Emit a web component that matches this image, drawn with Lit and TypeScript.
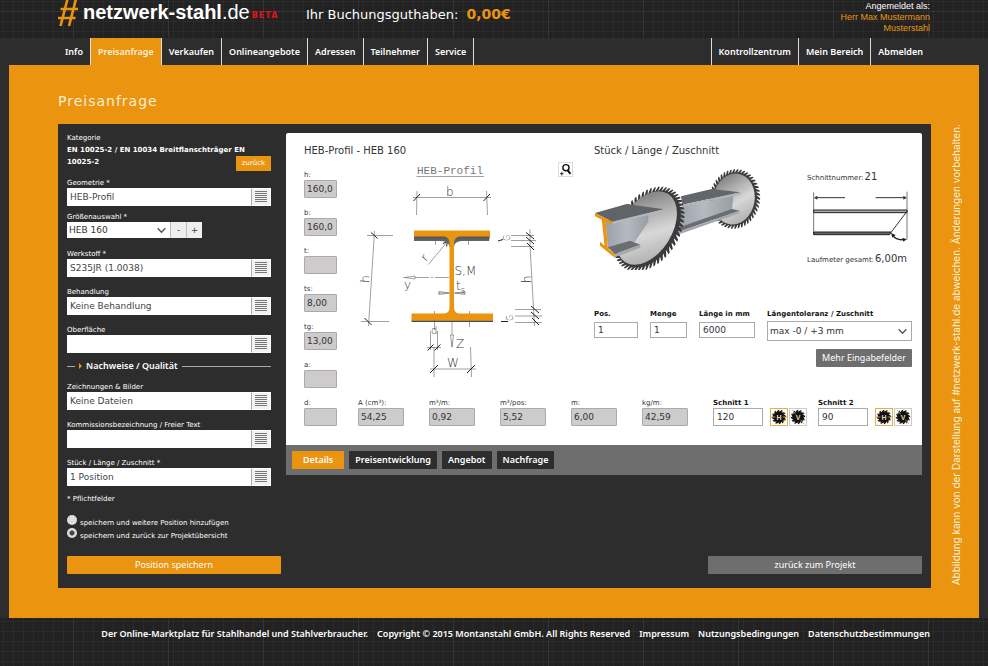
import { LitElement, html, svg, css } from "lit";
import { customElement } from "lit/decorators.js";
import { classMap } from "lit/directives/class-map.js";

const mainNav = ["Info", "Preisanfrage", "Verkaufen", "Onlineangebote", "Adressen", "Teilnehmer", "Service"];
const userNav = ["Kontrollzentrum", "Mein Bereich", "Abmelden"];
const tabs = ["Details", "Preisentwicklung", "Angebot", "Nachfrage"];
const dimensions = [["h:", "160,0"], ["b:", "160,0"], ["t:", ""], ["ts:", "8,00"], ["tg:", "13,00"], ["a:", ""]];
const totals = [["A (cm³):", "54,25"], ["m³/m:", "0,92"], ["m³/pos:", "5,52"], ["m:", "6,00"], ["kg/m:", "42,59"]];

/** Outline of a saw blade seen at an angle: a toothed, rotated ellipse. */
function sawOutline(cx: number, cy: number, rx: number, ry: number, tilt: number, teeth: number, depth: number): string {
  const a = (tilt * Math.PI) / 180;
  const at = (t: number, grow: number) => {
    const x = (rx + grow) * Math.cos(t);
    const y = (ry + grow) * Math.sin(t);
    const px = cx + x * Math.cos(a) - y * Math.sin(a);
    const py = cy + x * Math.sin(a) + y * Math.cos(a);
    return `${px.toFixed(1)} ${py.toFixed(1)}`;
  };
  const points: string[] = [];
  const step = (2 * Math.PI) / teeth;
  for (let i = 0; i < teeth; i++) {
    points.push(at(i * step, 0), at((i + 0.75) * step, depth), at((i + 1.15) * step, depth), at((i + 0.85) * step, 0));
  }
  return `M${points.join("L")}Z`;
}

const listIcon = html`<svg class="list-icon" viewBox="0 0 12 12" aria-hidden="true">
  <path d="M0 .5H12M0 2.5H12M0 4.5H12M0 6.5H12M0 8.5H12M0 10.5H12" stroke="#777" stroke-width="1" shape-rendering="crispEdges" />
</svg>`;

const chevron = html`<svg class="chevron" viewBox="0 0 8 6" aria-hidden="true">
  <path d="M.6 1 4 4.6 7.4 1" fill="none" stroke="#555" stroke-width="1.2" />
</svg>`;

const profileDrawing = html`<svg class="profile" viewBox="345 158 245 230" role="img" aria-label="HEB-Profil">
  <defs>
    <linearGradient id="steel" x1="0" y1="0" x2="0" y2="1">
      <stop offset="0" stop-color="#555" /><stop offset="1" stop-color="#777" />
    </linearGradient>
  </defs>
  <text class="cad-title" x="417" y="174">HEB-Profil</text>
  <g fill="none" stroke="#777" stroke-width=".7">
    <path d="M416.500 176.500H484" />
    <path d="M413 197.500H491M417 191 416.500 215M486.500 191 487.500 215" />
    <path d="M374.500 231 368.500 326M367 235.500H393M361 321.500H389" />
    <path d="M511 235.500H534M511 240.500H536M511 246.500H534M530 229V246L534.500 326M515 309.500H541M515 316H542M515 322.500H542" />
    <path d="M403 277.500H412M415 277.500H450" stroke-dasharray="14 2 2 2" />
    <path d="M438 293H465M439 291.500V294.500L449 293ZM465 291.500V294.500L455 293Z" />
    <path d="M428.500 264.500 447 242M435.500 240V245M468.500 240V245" />
    <path d="M430.500 331V350M437.500 331V350M427 347.500H441M434.500 311V330M469.500 311V327" />
    <path d="M434 347V377M470.500 347 471.500 377M430 369H476M452 322V347" />
    <path d="M450.500 335H453.500L452 347ZM405 277.500 415 276V279Z" fill="#fff" />
  </g>
  <g fill="none" stroke="#222" stroke-width="1">
    <path d="M413.500 201 420 194M483.500 201 490 194" />
    <path d="M371 232.500 377.500 238.500M364.500 318 371.500 325" />
    <path d="M526 232.500 534 239M526 237 534 244M527 243 534 250M531 306 539 313M531 312 539 319M532 318 539 325" />
    <path d="M427.500 350.500 433.500 344.500M434.500 350.500 440.500 344.500M430 373 438 365M467 373 475 365" />
    <path d="M443 243.500 447.500 241.500 446.500 246.500M498 241 503 239.500M501 321.500H508" />
  </g>
  <path d="M414 236H490L489 241H461Q454 242 454 247H449.500Q449 242 442 241H414Z" fill="url(#steel)" />
  <path d="M414.500 230.500H489Q490 230.500 490 231.500V236.500H459Q454 238 454 243V308Q454.500 313 459 313.500H493V320.500H411.500V313.500H444Q449.500 313 449.500 308V243Q449.500 238 445 236.500H414V231.500Z" fill="#ea940f" />
  <path d="M411.500 321.200H493" stroke="#5a4a30" stroke-width="1.400" />
  <g class="cad">
    <text x="446" y="196">b</text>
    <text x="404" y="289">y</text>
    <text x="454.500" y="275">S,M</text>
    <text x="456" y="290">t<tspan class="sub" dy="3">s</tspan></text>
    <text class="mid" x="431" y="334">d</text>
    <text x="456" y="348">Z</text>
    <text x="447" y="367">W</text>
    <text transform="translate(369 283) rotate(-87)">h</text>
    <text transform="translate(531 283) rotate(-90)">h</text>
    <text transform="translate(426 262) rotate(-50)">r</text>
    <text class="sub" transform="translate(510 241) rotate(-90)">G</text>
    <text class="sub" transform="translate(513 321) rotate(-90)">G</text>
  </g>
</svg>`;

const magnifier = html`<svg class="magnifier" viewBox="0 0 14 14" aria-hidden="true">
  <circle cx="7.500" cy="5" r="3.300" fill="none" stroke="#111" stroke-width="1.500" />
  <path d="M9 7.500 12.300 11.700" stroke="#111" stroke-width="2.200" />
  <path d="M1 11.500H5M3 9.500V13.500" stroke="#111" stroke-width=".9" />
</svg>`;

const sawDrawing = html`<svg class="saws" viewBox="42 90 558 330" role="img" aria-label="Zuschnitt">
  <defs>
    <linearGradient id="blade" x1=".1" y1="0" x2=".8" y2="1">
      <stop offset="0" stop-color="#707070" /><stop offset=".3" stop-color="#a6a6a6" />
      <stop offset=".6" stop-color="#d8d8d8" /><stop offset="1" stop-color="#ababab" />
    </linearGradient>
    <linearGradient id="web" x1="0" y1="0" x2="1" y2="0">
      <stop offset="0" stop-color="#9aa0a6" /><stop offset=".5" stop-color="#b4babf" /><stop offset="1" stop-color="#979ea4" />
    </linearGradient>
  </defs>
  <path d=${sawOutline(464, 207, 66, 80, 10, 46, 10)} fill="#3b3b3b" />
  <ellipse cx="462" cy="207" rx="62" ry="77" transform="rotate(10 462 207)" fill="url(#blade)" />
  <path d="M303 199 395 177 482 187 307 224Z" fill="#63666b" />
  <path d="M307 224 482 187V193L307 231Z" fill="#aeb3b8" />
  <path d="M300 231 460 198 456 241 284 296Z" fill="url(#web)" />
  <path d="M284 296 456 237 479 242 276 312Z" fill="#6a6d72" />
  <path d="M276 312 479 242V250L276 320Z" fill="#a4a9ae" />
  <path d=${sawOutline(206, 297, 81, 126, 32, 56, 12)} fill="#3b3b3b" />
  <ellipse cx="200" cy="294" rx="76" ry="121" transform="rotate(32 200 294)" fill="url(#blade)" />
  <path d="M76 272 205 255V275L160 342 84 358Z" fill="url(#web)" />
  <path d="M84 352 150 332 181 344 104 372Z" fill="#6a6d72" />
  <path d="M104 372 181 344V353L104 382Z" fill="#a4a9ae" />
  <path d="M45 249 140 222 252 238 97 275Z" fill="#606368" />
  <path d="M97 275 252 238V243L97 283Z" fill="#b3b8bc" />
  <g fill="#ea940f">
    <path d="M45 249 97 275V284L45 259Z" />
    <path d="M65 266 77 273 84 360 74 350Z" />
    <path d="M60 335 104 371V383L60 347Z" />
  </g>
</svg>`;

const cutDrawing = html`<svg class="cut" viewBox="141 80 309 162" role="img" aria-label="Schnittbild">
  <path d="M161 90V217M441 88V232" fill="none" stroke="#777" stroke-width="3" />
  <path d="M165 106H255M347 106H437" fill="none" stroke="#333" stroke-width="3" />
  <path d="M162 106 172 100V112ZM440 106 430 100V112Z" fill="#333" />
  <path d="M161 143H441V151H161Z" fill="#aaa" stroke="#222" stroke-width="3" />
  <path d="M161 209H393L389 217H161Z" fill="#666" stroke="#222" stroke-width="3" />
  <path d="M441 147 391 213" fill="none" stroke="#333" stroke-width="3" />
  <path d="M398 219Q411 236 434 231" fill="none" stroke="#222" stroke-width="4" />
  <path d="M393 212 407 218 397 226ZM440 231 427 226 430 238Z" fill="#222" />
</svg>`;

const sawIcon = (letter: string) => html`<svg class="saw-icon" viewBox="0 0 16 16" aria-hidden="true">
  ${svg`<path d=${sawOutline(8, 8, 5.6, 5.6, 0, 12, 1.6)} fill="#111" />`}
  <path d=${letter === "H" ? "M0 8H16" : "M2 1 14 15"} stroke="#c9a24a" stroke-width=".8" />
  <circle cx="8" cy="8" r="3.600" fill="#111" />
  <text x="8" y="11" text-anchor="middle">${letter}</text>
</svg>`;

@customElement("app-root")
export class AppRoot extends LitElement {
  static styles = css`
    :host {
      display: block;
      min-height: 100vh;
      --orange: #ea940f;
      --dark: #2d2d2d;
      --grey: #6e6e6e;
      --ui: "Noto Sans", "Open Sans", sans-serif;
      --wide: "DejaVu Sans", sans-serif;
      color: #fff;
      font: 9px/12px var(--wide);
      background-color: #222;
      background-image:
        linear-gradient(90deg, #343434 1px, transparent 1px),
        linear-gradient(#343434 1px, transparent 1px),
        linear-gradient(90deg, #2b2b2b 1px, transparent 1px),
        linear-gradient(#2b2b2b 1px, transparent 1px);
      background-size: 95px 95px, 95px 95px, 10px 10px, 10px 10px;
      background-position: 73px 11px, 73px 11px, 3px 1px, 3px 1px;
    }
    * { box-sizing: border-box; }
    p, h1, h2, ul { margin: 0; padding: 0; }
    svg { display: block; flex: none; }
    a { color: inherit; text-decoration: none; }
    button, input, select { margin: 0; font: inherit; border: 0; border-radius: 0; }
    button { cursor: pointer; padding: 0; color: #fff; }

    .header { display: flex; height: 38px; padding: 0 58px; }
    .logo { display: flex; align-items: flex-start; width: 248px; }
    .hash { width: 20px; height: 28px; margin-right: 5px; }
    .brand { font: bold 20px/24px "Liberation Sans", sans-serif; }
    .brand-tld { font-weight: normal; }
    .beta { margin: 10px 0 0 2px; color: #e3131d; font: bold 8px/12px var(--wide); letter-spacing: 1px; }
    .credit { flex: 1; font-size: 13px; line-height: 28px; }
    .credit-value { margin-left: 4px; color: var(--orange); font-size: 14px; }
    .user { font: 9px/11px "Liberation Sans", sans-serif; text-align: right; padding-top: 1px; }
    .user-name { color: var(--orange); }

    .nav { display: flex; justify-content: space-between; height: 27px; padding: 0 58px; background: var(--dark); font: 600 9px/27px var(--ui); }
    .nav-list { display: flex; list-style: none; }
    .nav-item { padding: 0 7px; border-right: 1px solid #ddd; }
    .nav-list.right .nav-item { border-right: 0; border-left: 1px solid #ddd; }
    .nav-item.active { background: var(--orange); color: #fdf3dc; }

    .frame { padding: 0 9px; background: var(--dark); }
    .stage { display: grid; grid-template-columns: 1fr 49px; background: var(--orange); padding: 28px 0 30px 49px; }
    .title { grid-column: 1 / -1; height: 31px; font: 14px/16px var(--wide); letter-spacing: 1px; color: #fdf0d2; }
    .notice { writing-mode: vertical-rl; transform: rotate(180deg); justify-self: center; align-self: start; font: 10px/12px "Inter", "Liberation Sans", sans-serif; white-space: nowrap; color: #fdf3dc; }
    .panel { background: var(--dark); padding: 9px 9px 14px; }
    .columns { display: grid; grid-template-columns: 204px 1fr; gap: 15px; align-items: start; }

    .small { font: 7px/10px var(--wide); }
    .category { display: flex; flex-direction: column; margin-bottom: 7px; font: bold 7px/12px var(--wide); }
    .category-label { font-weight: normal; line-height: 11px; }
    .category-row { display: flex; justify-content: space-between; height: 15px; }
    .back { width: 35px; height: 15px; background: var(--orange); font: 7px/15px var(--wide); }
    .stack { display: flex; flex-direction: column; gap: 10px; }
    .field { display: block; font: 7px/10px var(--wide); white-space: nowrap; }
    .entry { display: flex; height: 18px; background: #fff; }
    .entry-input { flex: 1; min-width: 0; padding: 0 3px; background: #fff; color: #444; font: 9px/16px var(--wide); }
    .entry-button { display: grid; place-items: center; width: 20px; background: #f2f2f2; border: 1px solid #fff; border-left-color: #aaa; }
    .list-icon { width: 12px; height: 12px; }
    .size { margin: 6px 0 11px; }
    .size-row { display: flex; height: 16px; width: 135px; }
    .picker { display: grid; flex: 1; background: #fff; }
    .picker > * { grid-area: 1 / 1; }
    .picker-select { appearance: none; width: 100%; padding: 0 2px; background: #fff; color: #333; font: 9px/14px var(--wide); }
    .chevron { width: 9px; height: 7px; align-self: center; justify-self: end; margin-right: 4px; pointer-events: none; }
    .step { width: 16px; background: #eee; color: #444; border-left: 1px solid #bbb; font: 9px/16px var(--wide); }
    .divider { display: flex; align-items: center; gap: 4px; margin: 7px 0 10px; font: 600 9px/12px var(--ui); }
    .divider::before, .divider::after { content: ""; height: 1px; background: #aaa; }
    .divider::before { width: 8px; }
    .divider::after { flex: 1; }
    .divider-mark { width: 3px; height: 6px; fill: var(--orange); }
    .required { margin: 8px 0 11px; }
    .choice { display: flex; gap: 3px; height: 13px; font: 7px/16px var(--wide); }
    .radio { appearance: none; width: 10px; height: 10px; border-radius: 50%; background: #ddd; }
    .radio:checked { background: radial-gradient(circle, #444 0 2px, #ddd 3px); }
    .actions { display: flex; justify-content: space-between; margin-top: 15px; }
    .action { width: 214px; height: 18px; border-radius: 1px; background: var(--orange); font: 9px/18px var(--ui); }
    .action.neutral { background: var(--grey); }

    .card { background: #fff; color: #333; border-radius: 2px 2px 0 0; padding: 11px 10px 19px 18px; }
    .card-top { display: grid; grid-template-columns: 290px 1fr; }
    .card-title { font: 10px/14px var(--wide); }
    .spec { display: flex; gap: 8px; margin-top: 12px; }
    .spec-list { display: flex; flex-direction: column; gap: 10px; width: 33px; }
    .spec-art { flex: 1; position: relative; height: 218px; }
    .profile { width: 245px; height: 230px; margin-top: -12px; }
    .zoom { position: absolute; top: -8px; right: 21px; width: 15px; height: 15px; background: #fff; border: 1px solid #ddd; }
    .magnifier { width: 13px; height: 13px; }
    .cad { font: 12px "DejaVu Sans", sans-serif; font-weight: 200; fill: #333; }
    .cad-title { font: 11px "Liberation Mono", monospace; fill: #777; }
    .mid { font-size: 10px; }
    .sub { font-size: 8px; }
    .readonly { display: block; width: 100%; height: 18px; padding: 0 2px; border: 1px solid #aaa; border-radius: 1px; background: #cdcbcb; color: #333; font: 9px/16px var(--wide); }
    .totals { display: grid; grid-template-columns: 54px repeat(5, 71px) 105px 1fr; margin-top: 10px; }
    .thickness { width: 33px; }
    .total { width: 46px; }
    .cut-field { display: flex; align-items: end; gap: 7px; }
    .cut-field .field { width: 50px; }
    .bold { font-weight: bold; color: #111; }
    .text { display: block; width: 100%; height: 18px; padding: 0 3px; border: 1px solid #aaa; background: #fff; color: #333; font: 9px/16px var(--wide); }
    .saw-buttons { display: flex; gap: 1px; }
    .saw-button { display: grid; place-items: center; width: 18px; height: 18px; background: #fff; border: 1px solid #ccc; }
    .saw-button.on { border-color: #e3b04b; }
    .saw-icon { width: 16px; height: 16px; }
    .saw-icon text { font: bold 7px "Liberation Sans", sans-serif; fill: #e8d9ad; }

    .art { display: flex; gap: 27px; margin: 2px 0 39px; }
    .saws { width: 186px; height: 110px; }
    .facts { padding-top: 10px; white-space: nowrap; }
    .fact { font: 7px/14px var(--wide); }
    .fact-value { margin-left: 1px; font-size: 10px; }
    .cut { width: 103px; height: 54px; margin: 4px 0 9px; }
    .order { display: grid; grid-template-columns: 44px 37px 56px 1fr; column-gap: 12px; align-items: start; }
    .order .text { height: 16px; margin-top: 3px; line-height: 14px; }
    .order .picker { height: 20px; margin-top: 2px; border: 1px solid #aaa; }
    .more { display: block; margin: 8px 0 0 auto; width: 96px; height: 18px; background: var(--grey); border-radius: 1px; font: 9px/18px var(--ui); }

    .tabs { display: flex; gap: 5px; padding: 6px; height: 30px; background: var(--grey); }
    .tab { height: 18px; padding: 0 6px; background: var(--dark); border-radius: 1px; font: 600 9px/18px var(--ui); }
    .tab.active { background: var(--orange); padding: 0 11px; }

    .footer { display: flex; flex-wrap: wrap; justify-content: flex-end; gap: 9px; padding: 9px 58px 26px; font: 600 9px/14px var(--ui); }
  `;

  private entry(label: string, value = "") {
    return html`<div class="field">
      <label>${label}
        <span class="entry">
          <input class="entry-input" .value=${value} />
          <button class="entry-button" type="button" aria-label="Auswahl öffnen">${listIcon}</button>
        </span>
      </label>
    </div>`;
  }

  private readonlyField([label, value]: string[], extra = "") {
    return html`<label class="field ${extra}">${label}<input class="readonly" readonly .value=${value} /></label>`;
  }

  private cutField(label: string, value: string) {
    return html`<div class="cut-field">
      <label class="field bold">${label}<input class="text" .value=${value} /></label>
      <div class="saw-buttons">
        <button class="saw-button on" type="button" aria-label="Horizontal">${sawIcon("H")}</button>
        <button class="saw-button" type="button" aria-label="Vertikal">${sawIcon("V")}</button>
      </div>
    </div>`;
  }

  render() {
    return html`
      <header class="header">
        <div class="logo">
          <svg class="hash" viewBox="0 0 20 28" aria-hidden="true">
            <path d="M9.500 -1 2.500 26M18 -1 11 26M2.500 9H20M0 18H17.500" fill="none" stroke="#ea940f" stroke-width="2.600" />
          </svg>
          <span class="brand">netzwerk-stahl<span class="brand-tld">.de</span></span>
          <span class="beta">BETA</span>
        </div>
        <p class="credit">Ihr Buchungsguthaben: <b class="credit-value">0,00€</b></p>
        <div class="user">Angemeldet als:<div class="user-name">Herr Max Mustermann<br />Musterstahl</div></div>
      </header>
      <nav class="nav">
        <ul class="nav-list">
          ${mainNav.map((n) => html`<li class=${classMap({ "nav-item": true, active: n === "Preisanfrage" })}><a href="#">${n}</a></li>`)}
        </ul>
        <ul class="nav-list right">
          ${userNav.map((n) => html`<li class="nav-item"><a href="#">${n}</a></li>`)}
        </ul>
      </nav>
      <div class="frame">
        <main class="stage">
          <h1 class="title">Preisanfrage</h1>
          <div class="panel">
            <div class="columns">
              <form>
                <div class="category">
                  <span class="category-label">Kategorie</span>
                  <span>EN 10025-2 / EN 10034 Breitflanschträger EN</span>
                  <div class="category-row">
                    <span>10025-2</span>
                    <button class="back" type="button">zurück</button>
                  </div>
                </div>
                ${this.entry("Geometrie *", "HEB-Profil")}
                <div class="field size">
                  <label for="size">Größenauswahl *</label>
                  <div class="size-row">
                    <div class="picker"><select class="picker-select" id="size"><option>HEB 160</option></select>${chevron}</div>
                    <button class="step" type="button">-</button>
                    <button class="step" type="button">+</button>
                  </div>
                </div>
                <div class="stack">
                  ${this.entry("Werkstoff *", "S235JR (1.0038)")}
                  ${this.entry("Behandlung", "Keine Behandlung")}
                  ${this.entry("Oberfläche")}
                </div>
                <h2 class="divider">
                  <svg class="divider-mark" viewBox="0 0 3 6" aria-hidden="true"><path d="M0 0 3 3 0 6Z" /></svg>
                  Nachweise / Qualität
                </h2>
                <div class="stack">
                  ${this.entry("Zeichnungen & Bilder", "Keine Dateien")}
                  ${this.entry("Kommissionsbezeichnung / Freier Text")}
                  ${this.entry("Stück / Länge / Zuschnitt *", "1 Position")}
                </div>
                <p class="small required">* Pflichtfelder</p>
                <label class="choice"><input class="radio" type="radio" name="next" />speichern und weitere Position hinzufügen</label>
                <label class="choice"><input class="radio" type="radio" name="next" checked />speichern und zurück zur Projektübersicht</label>
              </form>
              <section>
                <div class="card">
                  <div class="card-top">
                    <div>
                      <h2 class="card-title">HEB-Profil - HEB 160</h2>
                      <div class="spec">
                        <div class="spec-list">${dimensions.map((d) => this.readonlyField(d))}</div>
                        <div class="spec-art">
                          ${profileDrawing}
                          <button class="zoom" type="button" aria-label="Vergrößern">${magnifier}</button>
                        </div>
                      </div>
                    </div>
                    <div>
                      <h2 class="card-title">Stück / Länge / Zuschnitt</h2>
                      <div class="art">
                        ${sawDrawing}
                        <div class="facts">
                          <p class="fact">Schnittnummer:<span class="fact-value">21</span></p>
                          ${cutDrawing}
                          <p class="fact">Laufmeter gesamt:<span class="fact-value">6,00m</span></p>
                        </div>
                      </div>
                      <div class="order">
                        <label class="field bold">Pos.<input class="text" .value=${"1"} /></label>
                        <label class="field bold">Menge<input class="text" .value=${"1"} /></label>
                        <label class="field bold">Länge in mm<input class="text" .value=${"6000"} /></label>
                        <label class="field bold">Längentoleranz / Zuschnitt
                          <span class="picker"><select class="picker-select"><option>max -0 / +3 mm</option></select>${chevron}</span>
                        </label>
                      </div>
                      <button class="more" type="button">Mehr Eingabefelder</button>
                    </div>
                  </div>
                  <div class="totals">
                    ${this.readonlyField(["d:", ""], "thickness")}
                    ${totals.map((t) => this.readonlyField(t, "total"))}
                    ${this.cutField("Schnitt 1", "120")}
                    ${this.cutField("Schnitt 2", "90")}
                  </div>
                </div>
                <div class="tabs">
                  ${tabs.map((t, i) => html`<button type="button" class=${classMap({ tab: true, active: i === 0 })}>${t}</button>`)}
                </div>
              </section>
            </div>
            <div class="actions">
              <button class="action" type="button">Position speichern</button>
              <button class="action neutral" type="button">zurück zum Projekt</button>
            </div>
          </div>
          <p class="notice">Abbildung kann von der Darstellung auf #netzwerk-stahl.de abweichen. Änderungen vorbehalten.</p>
        </main>
      </div>
      <footer class="footer">
        <span>Der Online-Marktplatz für Stahlhandel und Stahlverbraucher.</span>
        <span>Copyright © 2015 Montanstahl GmbH. All Rights Reserved</span>
        <a href="#">Impressum</a><a href="#">Nutzungsbedingungen</a><a href="#">Datenschutzbestimmungen</a>
      </footer>
    `;
  }
}
